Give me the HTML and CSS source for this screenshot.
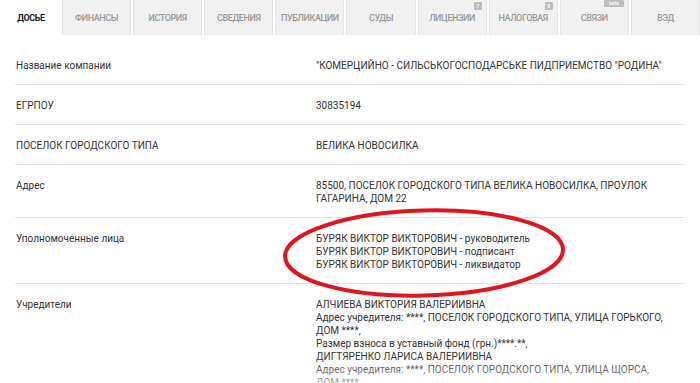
FILE: index.html
```html
<!DOCTYPE html>
<html lang="ru">
<head>
  <meta charset="UTF-8" />
  <title>Досье</title>
  <link rel="stylesheet" href="styles.css">
</head>
<body>
  <!-- Вкладки -->
  <div class="tabs">
    <div class="tab active">ДОСЬЕ</div>
    <div class="tab">ФИНАНСЫ</div>
    <div class="tab">ИСТОРИЯ</div>
    <div class="tab">СВЕДЕНИЯ</div>
    <div class="tab">ПУБЛИКАЦИИ</div>
    <div class="tab">СУДЫ</div>
    <div class="tab">ЛИЦЕНЗИИ<span class="badge">7</span></div>
    <div class="tab">НАЛОГОВАЯ<span class="badge">8</span></div>
    <div class="tab">СВЯЗИ<span class="badge badge-wide">beta</span></div>
    <div class="tab">ВЭД</div>
  </div>

  <!-- Досье компании -->
  <div class="dossier">
    <div class="row">
      <div class="label">Название компании</div>
      <div class="value">"КОМЕРЦИЙНО - СИЛЬСЬКОГОСПОДАРСЬКЕ ПИДПРИЕМСТВО "РОДИНА"</div>
    </div>
    <div class="row">
      <div class="label">ЕГРПОУ</div>
      <div class="value">30835194</div>
    </div>
    <div class="row">
      <div class="label">ПОСЕЛОК ГОРОДСКОГО ТИПА</div>
      <div class="value">ВЕЛИКА НОВОСИЛКА</div>
    </div>
    <div class="row">
      <div class="label">Адрес</div>
      <div class="value">85500, ПОСЕЛОК ГОРОДСКОГО ТИПА ВЕЛИКА НОВОСИЛКА, ПРОУЛОК ГАГАРИНА, ДОМ 22</div>
    </div>
    <div class="row">
      <div class="label">Уполномоченные лица</div>
      <div class="value">
        <div>БУРЯК ВИКТОР ВИКТОРОВИЧ - руководитель</div>
        <div>БУРЯК ВИКТОР ВИКТОРОВИЧ - подписант</div>
        <div>БУРЯК ВИКТОР ВИКТОРОВИЧ - ликвидатор</div>
      </div>
    </div>
    <div class="row">
      <div class="label">Учредители</div>
      <div class="value founders">
        <div>АЛЧИЕВА ВИКТОРИЯ ВАЛЕРИИВНА</div>
        <div>Адрес учредителя: ****, ПОСЕЛОК ГОРОДСКОГО ТИПА, УЛИЦА ГОРЬКОГО, ДОМ ****,</div>
        <div>Размер взноса в уставный фонд (грн.)****.**,</div>
        <div>ДИГТЯРЕНКО ЛАРИСА ВАЛЕРИИВНА</div>
        <div>Адрес учредителя: ****, ПОСЕЛОК ГОРОДСКОГО ТИПА, УЛИЦА ЩОРСА, ДОМ ****,</div>
        <div>Размер взноса в уставный фонд (грн.)****.**,</div>
      </div>
    </div>
  </div>

  <!-- Пометка от руки -->
  <svg class="mark" width="700" height="383" viewBox="0 0 700 383">
    <ellipse cx="424" cy="253" rx="139" ry="42.5" transform="rotate(-1.5 424 253)"
      fill="none" stroke="#e0161f" stroke-width="4"/>
  </svg>
</body>
</html>
```

FILE: styles.css
```css
body {
  font-family: Roboto, 'Liberation Sans', sans-serif;
  font-size: 10px;
  color: #333;
  background-color: #fff;
  margin: 0;
  padding: 0;
  height: 383px;
  overflow: hidden;
  position: relative;
}

/* Вкладки */
.tabs {
  display: flex;
  gap: 2px;
  height: 35px;
}

.tab {
  flex: 1;
  position: relative;
  display: flex;
  align-items: center;
  justify-content: center;
  background-color: #f1f1f1;
  border-left: 1px solid #e4e4e4;
  border-right: 1px solid #e4e4e4;
  color: #999;
  font-size: 9px;
  font-weight: 500;
  letter-spacing: -0.4px;
}

.tab.active {
  flex: 0 0 62px;
  background-color: #fff;
  border: none;
  color: #222;
  font-weight: 700;
  margin-right: -2px;
}

.badge {
  position: absolute;
  top: 2px;
  right: 4px;
  width: 8px;
  height: 8px;
  border-radius: 1px;
  background-color: #bdbdbd;
  color: #fff;
  font-size: 5px;
  line-height: 8px;
  text-align: center;
  letter-spacing: 0;
}

.badge-wide {
  top: 0;
  width: 20px;
  height: 7px;
  line-height: 7px;
}

/* Досье */
.dossier {
  padding: 10px 15px 0 15px;
}

.row {
  display: flex;
  padding: 14px 0 12px 0;
  border-bottom: 1px solid #e4e4e4;
  line-height: 13px;
}

.label {
  width: 300px;
  flex-shrink: 0;
  padding-left: 1px;
}

.value {
  flex: 1;
  padding-right: 15px;
}

.founders {
  position: relative;
}

.founders::after {
  content: "";
  position: absolute;
  left: 0;
  right: 0;
  top: 60px;
  height: 30px;
  background: linear-gradient(rgba(255,255,255,0), rgba(255,255,255,0.7));
}

.mark {
  position: absolute;
  top: 0;
  left: 0;
  pointer-events: none;
}
```
